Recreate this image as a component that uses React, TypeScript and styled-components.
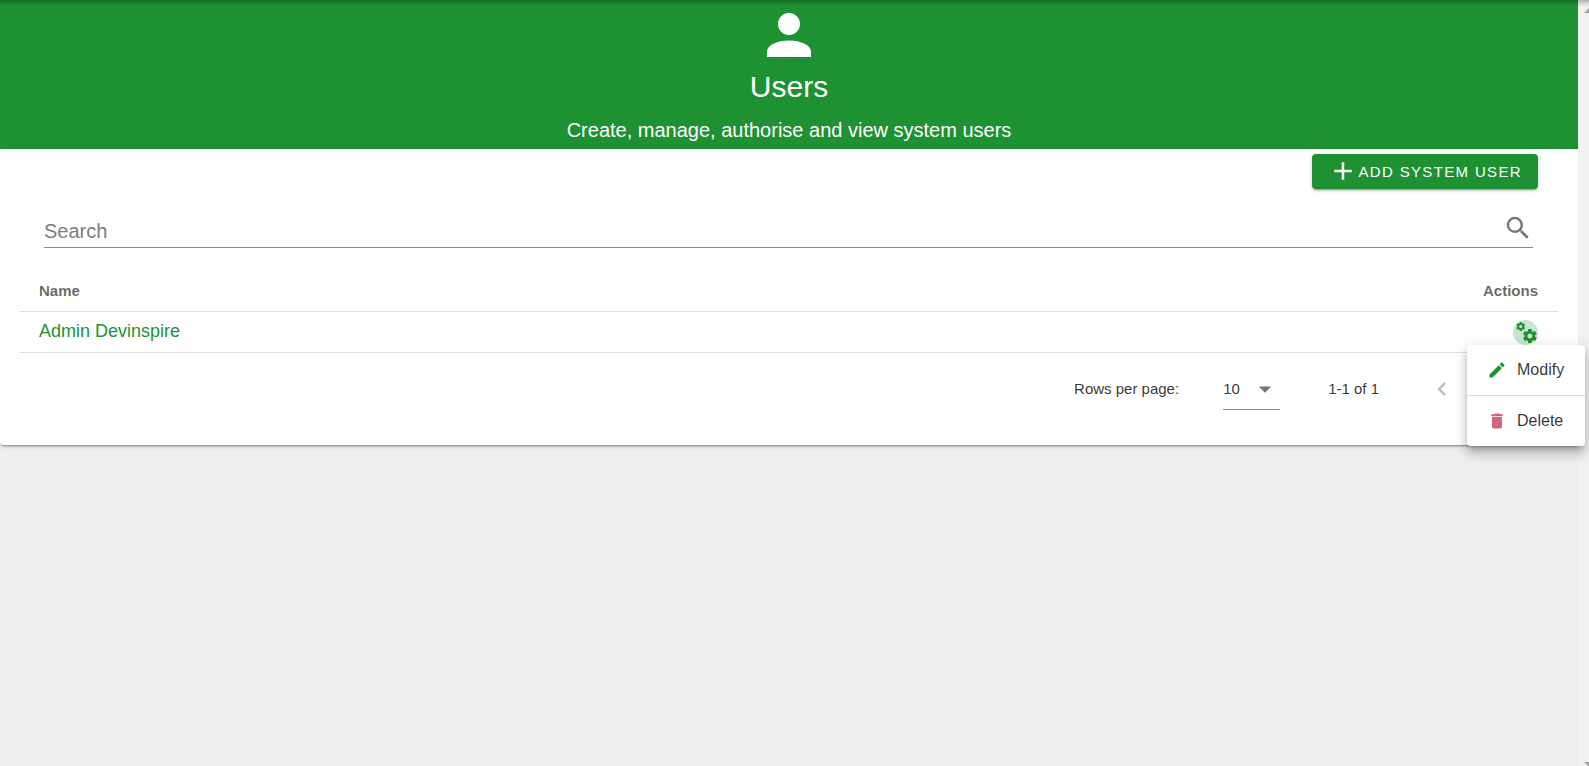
import React from "react";
import styled, { createGlobalStyle } from "styled-components";

const green = "#1e9132";

const GlobalStyle = createGlobalStyle`
  *, *::before, *::after { box-sizing: border-box; }
  body {
    margin: 0;
    background: #eeeeee;
    color: rgba(0, 0, 0, 0.8);
    font-family: "Liberation Sans", Arial, sans-serif;
    font-size: 15px;
  }
  button, input, select { font: inherit; color: inherit; }
`;

const Page = styled.div`
  display: grid;
  grid-template-columns: minmax(0, 1fr) 11px;
  min-height: 100vh;
`;

const TopShadow = styled.div`
  position: fixed;
  top: -10px;
  left: -10px;
  right: -10px;
  height: 10px;
  z-index: 3;
  box-shadow: 0 2px 4px -1px rgba(0, 0, 0, 0.2), 0 4px 5px 0 rgba(0, 0, 0, 0.1),
    0 1px 10px 0 rgba(0, 0, 0, 0.12);
`;

const ScrollTrack = styled.div`
  display: flex;
  flex-direction: column;
  justify-content: space-between;
  align-items: flex-end;
  height: 100vh;
  padding-top: 8px;
  background: #f1f1f1;
  overflow: hidden;
`;

const Arrow = styled.svg`
  display: block;
  width: 5px;
  height: 5px;
  fill: #a3a3a3;
`;

const Banner = styled.header`
  display: flex;
  flex-direction: column;
  align-items: center;
  padding: 2px 16px 7px;
  background: ${green};
  color: #fff;
  text-align: center;
`;

const Title = styled.h1`
  margin: 0 0 12px;
  font-size: 30px;
  line-height: 38px;
  font-weight: 400;
`;

const Subtitle = styled.p`
  margin: 0;
  font-size: 20px;
  line-height: 24px;
`;

const Icon = styled.svg<{ $size: number }>`
  display: block;
  flex: none;
  width: ${(p) => p.$size}px;
  height: ${(p) => p.$size}px;
  fill: currentColor;
`;

const Card = styled.section`
  padding: 5px 20px 20px 19px;
  background: #fff;
  border-radius: 4px;
  box-shadow: 0 3px 1px -2px rgba(0, 0, 0, 0.2), 0 2px 2px 0 rgba(0, 0, 0, 0.14),
    0 1px 5px 0 rgba(0, 0, 0, 0.12);
`;

const Toolbar = styled.div`
  display: flex;
  justify-content: flex-end;
  padding-right: 20px;
`;

const AddButton = styled.button`
  display: flex;
  align-items: center;
  height: 35px;
  padding: 0 16px 1px;
  border: 0;
  border-radius: 4px;
  background: ${green};
  color: #fff;
  letter-spacing: 0.09em;
  text-transform: uppercase;
  cursor: pointer;
  box-shadow: 0 3px 1px -2px rgba(0, 0, 0, 0.2), 0 2px 2px 0 rgba(0, 0, 0, 0.14),
    0 1px 5px 0 rgba(0, 0, 0, 0.12);
`;

const SearchField = styled.label`
  display: flex;
  align-items: flex-start;
  height: 37px;
  margin: 22px 25px 22px;
  border-bottom: 1px solid #8a8a8a;
  color: #757575;
  svg { margin-top: 2px; }
`;

const SearchInput = styled.input`
  flex: 1;
  min-width: 0;
  height: 36px;
  padding: 4px 0 0;
  border: 0;
  outline: 0;
  background: transparent;
  font-size: 20px;
  &::placeholder { color: #7d7d7d; opacity: 1; }
`;

const Table = styled.table`
  width: 100%;
  border-collapse: separate;
  border-spacing: 0;
`;

const HeadCell = styled.th<{ $end?: boolean }>`
  height: 42px;
  padding: 0 20px;
  border-bottom: 1px solid #e0e0e0;
  color: rgba(0, 0, 0, 0.6);
  font-weight: 700;
  text-align: ${(p) => (p.$end ? "right" : "left")};
`;

const Cell = styled.td`
  height: 41px;
  padding: 0 20px;
  border-bottom: 1px solid #e0e0e0;
`;

const UserLink = styled.a`
  display: block;
  padding-bottom: 2px;
  color: ${green};
  font-size: 18px;
  line-height: 20px;
  text-decoration: none;
`;

const ActionAnchor = styled.div`
  position: relative;
  width: 25px;
  margin-left: auto;
`;

const CogButton = styled.button`
  display: grid;
  place-items: center;
  width: 25px;
  height: 25px;
  padding: 0;
  border: 0;
  border-radius: 50%;
  background: rgba(30, 145, 50, 0.24);
  color: ${green};
  cursor: pointer;
`;

const Menu = styled.div`
  position: absolute;
  top: 100%;
  right: -47px;
  z-index: 2;
  width: 118px;
  border-radius: 4px;
  background: #fff;
  box-shadow: 0 5px 5px -3px rgba(0, 0, 0, 0.2), 0 8px 10px 1px rgba(0, 0, 0, 0.14),
    0 3px 14px 2px rgba(0, 0, 0, 0.12);
`;

const MenuItem = styled.button<{ $tint: string }>`
  display: flex;
  align-items: center;
  gap: 10px;
  width: 100%;
  height: 50px;
  padding: 0 20px;
  border: 0;
  background: transparent;
  font-size: 16px;
  cursor: pointer;
  & + & {
    height: 51px;
    border-top: 1px solid #e0e0e0;
  }
  svg { color: ${(p) => p.$tint}; }
`;

const Footer = styled.footer`
  display: flex;
  align-items: center;
  justify-content: flex-end;
  height: 72px;
  padding-right: 30px;
`;

const RowsLabel = styled.label`
  padding-bottom: 2px;
`;

const SelectBox = styled.span`
  display: grid;
  align-items: center;
  width: 57px;
  margin: 0 48px 0 44px;
  border-bottom: 1px solid #8a8a8a;
  & > * { grid-area: 1 / 1; }
  svg {
    justify-self: end;
    color: #757575;
    pointer-events: none;
  }
`;

const Select = styled.select`
  width: 100%;
  height: 40px;
  padding: 0;
  border: 0;
  outline: 0;
  appearance: none;
  background: transparent;
`;

const Range = styled.span`
  margin-right: 41px;
  padding-bottom: 2px;
`;

const PageButton = styled.button`
  display: grid;
  place-items: center;
  width: 44px;
  height: 44px;
  padding: 0;
  border: 0;
  background: transparent;
  color: #bdbdbd;
  & + & { margin-left: 20px; }
`;

const paths = {
  account:
    "M12,4A4,4 0 0,1 16,8A4,4 0 0,1 12,12A4,4 0 0,1 8,8A4,4 0 0,1 12,4M12,14C16.42,14 20,15.79 20,18V20H4V18C4,15.79 7.58,14 12,14Z",
  plus: "M19,13H13V19H11V13H5V11H11V5H13V11H19V13Z",
  magnify:
    "M9.5,3A6.5,6.5 0 0,1 16,9.5C16,11.11 15.41,12.59 14.44,13.73L14.71,14H15.5L20.5,19L19,20.5L14,15.5V14.71L13.73,14.44C12.59,15.41 11.11,16 9.5,16A6.5,6.5 0 0,1 3,9.5A6.5,6.5 0 0,1 9.5,3M9.5,5C7,5 5,7 5,9.5C5,12 7,14 9.5,14C12,14 14,12 14,9.5C14,7 12,5 9.5,5Z",
  cogs: "M15.9,18.45C17.25,18.45 18.35,17.35 18.35,16C18.35,14.65 17.25,13.55 15.9,13.55C14.54,13.55 13.45,14.65 13.45,16C13.45,17.35 14.54,18.45 15.9,18.45M21.1,16.68L22.58,17.84C22.71,17.95 22.75,18.13 22.66,18.29L21.26,20.71C21.17,20.86 21,20.92 20.83,20.86L19.09,20.16C18.73,20.44 18.33,20.67 17.91,20.85L17.64,22.7C17.62,22.87 17.47,23 17.3,23H14.5C14.32,23 14.18,22.87 14.15,22.7L13.89,20.85C13.46,20.67 13.07,20.44 12.71,20.16L10.96,20.86C10.81,20.92 10.62,20.86 10.54,20.71L9.14,18.29C9.05,18.13 9.09,17.95 9.22,17.84L10.7,16.68L10.65,16L10.7,15.31L9.22,14.16C9.09,14.05 9.05,13.86 9.14,13.71L10.54,11.29C10.62,11.13 10.81,11.07 10.96,11.13L12.71,11.84C13.07,11.56 13.46,11.32 13.89,11.15L14.15,9.29C14.18,9.13 14.32,9 14.5,9H17.3C17.47,9 17.62,9.13 17.64,9.29L17.91,11.15C18.33,11.32 18.73,11.56 19.09,11.84L20.83,11.13C21,11.07 21.17,11.13 21.26,11.29L22.66,13.71C22.75,13.86 22.71,14.05 22.58,14.16L21.1,15.31L21.15,16L21.1,16.68M6.69,8.07C7.56,8.07 8.26,7.37 8.26,6.5C8.26,5.63 7.56,4.92 6.69,4.92A1.58,1.58 0 0,0 5.11,6.5C5.11,7.37 5.82,8.07 6.69,8.07M10.03,6.94L11,7.68C11.07,7.75 11.09,7.87 11.03,7.97L10.13,9.53C10.08,9.63 9.96,9.67 9.86,9.63L8.74,9.18L8,9.62L7.81,10.81C7.79,10.92 7.7,11 7.59,11H5.79C5.67,11 5.58,10.92 5.56,10.81L5.4,9.62L4.64,9.18L3.52,9.63C3.41,9.67 3.3,9.63 3.24,9.53L2.34,7.97C2.28,7.87 2.31,7.75 2.39,7.68L3.34,6.94L3.31,6.5L3.34,6.06L2.39,5.32C2.31,5.25 2.28,5.13 2.34,5.03L3.24,3.47C3.3,3.37 3.41,3.32 3.52,3.37L4.63,3.82L5.4,3.38L5.56,2.19C5.58,2.08 5.67,2 5.79,2H7.59C7.7,2 7.79,2.08 7.81,2.19L8,3.38L8.74,3.82L9.86,3.37C9.96,3.32 10.08,3.37 10.13,3.47L11.03,5.03C11.09,5.13 11.07,5.25 11,5.32L10.03,6.06L10.06,6.5L10.03,6.94Z",
  pencil:
    "M20.71,7.04C21.1,6.65 21.1,6 20.71,5.63L18.37,3.29C18,2.9 17.35,2.9 16.96,3.29L15.12,5.12L18.87,8.87M3,17.25V21H6.75L17.81,9.93L14.06,6.18L3,17.25Z",
  trash:
    "M19,4H15.5L14.5,3H9.5L8.5,4H5V6H19M6,19A2,2 0 0,0 8,21H16A2,2 0 0,0 18,19V7H6V19Z",
  menuDown: "M7,10L12,15L17,10H7Z",
  left: "M15.41,16.58L10.83,12L15.41,7.41L14,6L8,12L14,18L15.41,16.58Z",
  right: "M8.59,16.58L13.17,12L8.59,7.41L10,6L16,12L10,18L8.59,16.58Z",
};

const Glyph = ({ name, size }: { name: keyof typeof paths; size: number }) => (
  <Icon $size={size} viewBox="0 0 24 24" aria-hidden="true">
    <path d={paths[name]} />
  </Icon>
);

export default function App() {
  return (
    <>
      <GlobalStyle />
      <TopShadow />
      <Page>
        <main>
          <Banner>
            <Glyph name="account" size={66} />
            <Title>Users</Title>
            <Subtitle>Create, manage, authorise and view system users</Subtitle>
          </Banner>
          <Card>
            <Toolbar>
              <AddButton type="button">
                <Glyph name="plus" size={30} />
                Add System User
              </AddButton>
            </Toolbar>
            <SearchField>
              <SearchInput type="text" placeholder="Search" aria-label="Search" />
              <Glyph name="magnify" size={30} />
            </SearchField>
            <Table>
              <thead>
                <tr>
                  <HeadCell scope="col">Name</HeadCell>
                  <HeadCell scope="col" $end>
                    Actions
                  </HeadCell>
                </tr>
              </thead>
              <tbody>
                <tr>
                  <Cell>
                    <UserLink href="#admin-devinspire">Admin Devinspire</UserLink>
                  </Cell>
                  <Cell>
                    <ActionAnchor>
                      <CogButton type="button" aria-label="User actions" aria-haspopup="menu" aria-expanded="true">
                        <Glyph name="cogs" size={24} />
                      </CogButton>
                      <Menu role="menu">
                        <MenuItem type="button" role="menuitem" $tint={green}>
                          <Glyph name="pencil" size={20} />
                          Modify
                        </MenuItem>
                        <MenuItem type="button" role="menuitem" $tint="#d1667b">
                          <Glyph name="trash" size={20} />
                          Delete
                        </MenuItem>
                      </Menu>
                    </ActionAnchor>
                  </Cell>
                </tr>
              </tbody>
            </Table>
            <Footer>
              <RowsLabel htmlFor="rows-per-page">Rows per page:</RowsLabel>
              <SelectBox>
                <Select id="rows-per-page" defaultValue="10">
                  <option>5</option>
                  <option>10</option>
                  <option>15</option>
                </Select>
                <Glyph name="menuDown" size={30} />
              </SelectBox>
              <Range>1-1 of 1</Range>
              <PageButton type="button" disabled aria-label="Previous page">
                <Glyph name="left" size={28} />
              </PageButton>
              <PageButton type="button" disabled aria-label="Next page">
                <Glyph name="right" size={28} />
              </PageButton>
            </Footer>
          </Card>
        </main>
        <ScrollTrack aria-hidden="true">
          <Arrow viewBox="0 0 5 5">
            <path d="M0 5L5 0V5Z" />
          </Arrow>
          <Arrow viewBox="0 0 5 5">
            <path d="M0 1H5V5H4Z" />
          </Arrow>
        </ScrollTrack>
      </Page>
    </>
  );
}
